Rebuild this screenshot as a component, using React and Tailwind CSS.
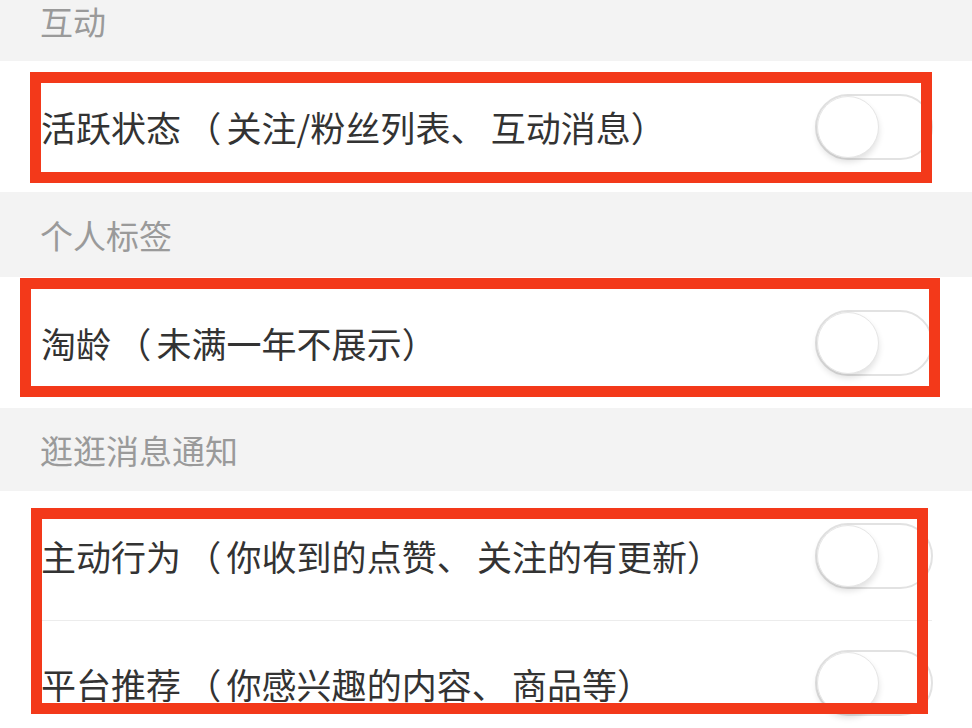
import React from "react";

const sections = [
  { title: "互动", h: "h-[61px] pb-[18px]", rows: [{ label: "活跃状态（关注/粉丝列表、互动消息）", h: "h-[131px]" }] },
  { title: "个人标签", h: "h-[85px] pt-[2px]", rows: [{ label: "淘龄（未满一年不展示）", h: "h-[131px]" }] },
  {
    title: "逛逛消息通知",
    h: "h-[83px] pt-[2px]",
    rows: [
      { label: "主动行为（你收到的点赞、关注的有更新）", h: "h-[129px]" },
      { label: "平台推荐（你感兴趣的内容、商品等）", h: "h-[124px]" },
    ],
  },
];

// full-width punctuation sits in a slightly wider box, like the phone's font
function Label({ text }) {
  return (
    <span className="text-[35px] leading-none text-[#333] whitespace-nowrap">
      {[...text].map((c, i) =>
        c === "（" ? (
          <span key={i} className="inline-block w-[1.3em] text-center">{c}</span>
        ) : c === "、" ? (
          <span key={i} className="inline-block w-[1.15em] text-left">{c}</span>
        ) : (
          c
        )
      )}
    </span>
  );
}

function Toggle() {
  return (
    <div className="w-[118px] h-[66px] shrink-0 rounded-full border-2 border-[#e2e2e2] bg-white flex items-center">
      <div className="w-[62px] h-[62px] rounded-full bg-white border border-[#e6e6e6] shadow-[0_4px_6px_rgba(0,0,0,0.12)]" />
    </div>
  );
}

export default function App() {
  return (
    <div
      className="relative h-[728px] overflow-hidden bg-[#f3f3f3]"
      style={{ fontFamily: '"Noto Sans CJK SC", "Noto Sans", sans-serif' }}
    >
      {sections.map((s) => (
        <div key={s.title}>
          {/* section header */}
          <div className={`${s.h} flex items-center px-[40px] text-[33px] leading-none text-[#9a9a9a]`}>
            {s.title}
          </div>
          <div className="bg-white">
            {s.rows.map((r, i) => (
              <div key={r.label}>
                {i > 0 && <div className="mx-[40px] h-px bg-[#ececec]" />}
                <div className={`${r.h} flex items-center justify-between pl-[41px] pr-[39px]`}>
                  <Label text={r.label} />
                  <Toggle />
                </div>
              </div>
            ))}
          </div>
        </div>
      ))}

      {/* red annotation boxes */}
      <div className="absolute left-[30px] top-[72px] w-[902px] h-[111px] border-[11px] border-[#f3391a]" />
      <div className="absolute left-[20px] top-[278px] w-[920px] h-[119px] border-[11px] border-[#f3391a]" />
      <div className="absolute left-[31px] top-[508px] w-[897px] h-[206px] border-[11px] border-[#f3391a]" />
    </div>
  );
}
